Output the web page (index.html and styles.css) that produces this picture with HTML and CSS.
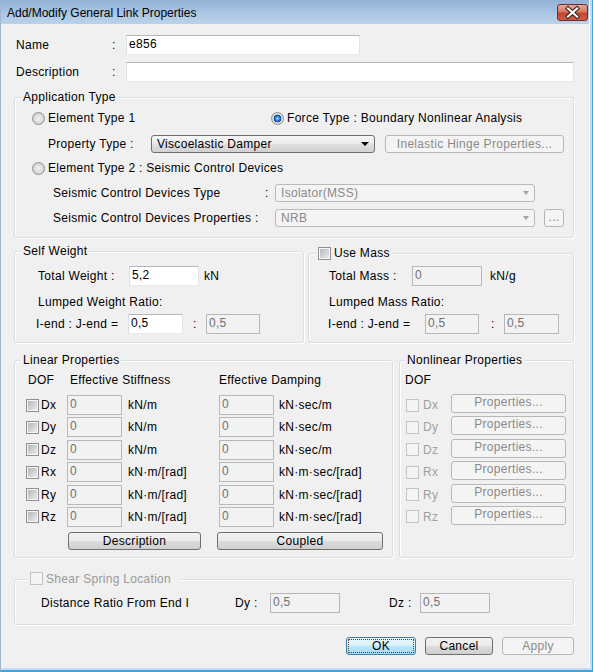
FILE: index.html
```html
<!DOCTYPE html>
<html>
  <head>
    <title>Add/Modify General Link Properties</title>
    <meta charset="UTF-8" />
    <link rel="stylesheet" href="styles.css">
  </head>
  <body>
    <div class="window">
      <div class="frame">

        <!-- caption bar -->
        <div class="titlebar">
          <span class="caption">Add/Modify General Link Properties</span>
          <span class="close-btn">
            <svg width="29" height="15" viewBox="0 0 29 15">
              <path d="M10 3.5 L19 11.5 M19 3.5 L10 11.5" stroke="#3d1f1c" stroke-width="4.2" stroke-linecap="square" fill="none"/>
              <path d="M10 3.5 L19 11.5 M19 3.5 L10 11.5" stroke="#ffffff" stroke-width="2.2" stroke-linecap="square" fill="none"/>
            </svg>
          </span>
        </div>

        <div class="client">
          <div class="row r-name">
            <span class="top-lbl">Name</span><span class="top-colon">:</span>
            <div class="edit name-edit">e856</div>
          </div>
          <div class="row r-desc">
            <span class="top-lbl">Description</span><span class="top-colon">:</span>
            <div class="edit desc-edit"></div>
          </div>

          <!-- Application Type -->
          <div class="group app-group">
            <div class="group-title">Application Type</div>
            <div class="row app-r1">
              <span class="opt opt-type1"><span class="radio"></span>Element Type 1</span>
              <span class="opt"><span class="radio on"></span>Force Type : Boundary Nonlinear Analysis</span>
            </div>
            <div class="row app-r2">
              <span class="prop-lbl">Property Type :</span>
              <div class="combo prop-combo"><span class="combo-text">Viscoelastic Damper</span><span class="arrow"></span></div>
              <div class="btn dis hinge-btn">Inelastic Hinge Properties...</div>
            </div>
            <div class="row app-r3">
              <span class="opt"><span class="radio"></span>Element Type 2 : Seismic Control Devices</span>
            </div>
            <div class="row app-r4">
              <span class="scd-lbl">Seismic Control Devices Type</span><span class="scd-colon">:</span>
              <div class="combo dis scd-combo"><span class="combo-text">Isolator(MSS)</span><span class="arrow"></span></div>
            </div>
            <div class="row app-r5">
              <span class="scd-lbl wide">Seismic Control Devices Properties :</span>
              <div class="combo dis scd-combo"><span class="combo-text">NRB</span><span class="arrow"></span></div>
              <div class="btn dis dots-btn">...</div>
            </div>
          </div>

          <!-- Self Weight / Use Mass -->
          <div class="pair">
            <div class="group weight-group">
              <div class="group-title">Self Weight</div>
              <div class="row w-total">
                <span class="w-lbl">Total Weight :</span>
                <div class="edit w70">5,2</div>
                <span class="unit-kn">kN</span>
              </div>
              <div class="row w-ratio">Lumped Weight Ratio:</div>
              <div class="row w-ends">
                <span class="w-end-lbl">I-end : J-end =</span>
                <div class="edit w55">0,5</div>
                <span class="w-colon">:</span>
                <div class="edit dis w54">0,5</div>
              </div>
            </div>

            <div class="group mass-group">
              <div class="group-title title-check"><span class="check"></span>Use Mass</div>
              <div class="row m-total">
                <span class="m-lbl">Total Mass :</span>
                <div class="edit dis w70">0</div>
                <span class="unit-kng">kN/g</span>
              </div>
              <div class="row m-ratio">Lumped Mass Ratio:</div>
              <div class="row m-ends">
                <span class="m-end-lbl">I-end : J-end =</span>
                <div class="edit dis w54">0,5</div>
                <span class="m-colon">:</span>
                <div class="edit dis w55">0,5</div>
              </div>
            </div>
          </div>

          <!-- Linear / Nonlinear -->
          <div class="pair pair-props">
            <div class="group lin-group">
              <div class="group-title">Linear Properties</div>
              <div class="row lin-head">
                <span class="h-dof">DOF</span>
                <span class="h-stiff">Effective Stiffness</span>
                <span>Effective Damping</span>
              </div>
              <div class="row lin-row first">
                <span class="check"></span><span class="dof">Dx</span>
                <div class="edit dis w55">0</div><span class="unit-k">kN/m</span>
                <div class="edit dis w55">0</div><span class="unit-c">kN·sec/m</span>
              </div>
              <div class="row lin-row">
                <span class="check"></span><span class="dof">Dy</span>
                <div class="edit dis w55">0</div><span class="unit-k">kN/m</span>
                <div class="edit dis w55">0</div><span class="unit-c">kN·sec/m</span>
              </div>
              <div class="row lin-row">
                <span class="check"></span><span class="dof">Dz</span>
                <div class="edit dis w55">0</div><span class="unit-k">kN/m</span>
                <div class="edit dis w55">0</div><span class="unit-c">kN·sec/m</span>
              </div>
              <div class="row lin-row">
                <span class="check"></span><span class="dof">Rx</span>
                <div class="edit dis w55">0</div><span class="unit-k">kN·m/[rad]</span>
                <div class="edit dis w55">0</div><span class="unit-c">kN·m·sec/[rad]</span>
              </div>
              <div class="row lin-row">
                <span class="check"></span><span class="dof">Ry</span>
                <div class="edit dis w55">0</div><span class="unit-k">kN·m/[rad]</span>
                <div class="edit dis w55">0</div><span class="unit-c">kN·m·sec/[rad]</span>
              </div>
              <div class="row lin-row">
                <span class="check"></span><span class="dof">Rz</span>
                <div class="edit dis w55">0</div><span class="unit-k">kN·m/[rad]</span>
                <div class="edit dis w55">0</div><span class="unit-c">kN·m·sec/[rad]</span>
              </div>
              <div class="row lin-btns">
                <div class="btn desc-btn">Description</div>
                <div class="btn coupled-btn">Coupled</div>
              </div>
            </div>

            <div class="group nl-group">
              <div class="group-title">Nonlinear Properties</div>
              <div class="row nl-head">DOF</div>
              <div class="row lin-row first nl-row"><span class="check dis"></span><span class="nl-dof">Dx</span><div class="btn dis nl-btn">Properties...</div></div>
              <div class="row lin-row nl-row"><span class="check dis"></span><span class="nl-dof">Dy</span><div class="btn dis nl-btn">Properties...</div></div>
              <div class="row lin-row nl-row"><span class="check dis"></span><span class="nl-dof">Dz</span><div class="btn dis nl-btn">Properties...</div></div>
              <div class="row lin-row nl-row"><span class="check dis"></span><span class="nl-dof">Rx</span><div class="btn dis nl-btn">Properties...</div></div>
              <div class="row lin-row nl-row"><span class="check dis"></span><span class="nl-dof">Ry</span><div class="btn dis nl-btn">Properties...</div></div>
              <div class="row lin-row nl-row"><span class="check dis"></span><span class="nl-dof">Rz</span><div class="btn dis nl-btn">Properties...</div></div>
            </div>
          </div>

          <!-- Shear Spring Location -->
          <div class="group shear-group">
            <div class="group-title title-check shear-title"><span class="check dis"></span>Shear Spring Location</div>
            <div class="row shear-row">
              <span class="dist-lbl">Distance Ratio From End I</span>
              <span class="dy-lbl">Dy :</span>
              <div class="edit dis w70">0,5</div>
              <span class="dz-lbl">Dz :</span>
              <div class="edit dis w70">0,5</div>
            </div>
          </div>

          <div class="row dlg-buttons">
            <div class="btn default ok-btn">OK</div>
            <div class="btn cancel-btn">Cancel</div>
            <div class="btn dis apply-btn">Apply</div>
          </div>
        </div>
      </div>
    </div>
  </body>
</html>
```

FILE: styles.css
```css
* {
  box-sizing: border-box;
}

body {
  margin: 0;
  font-family: "Liberation Sans", Arial, sans-serif;
  font-size: 12px;
  color: #000;
  background: #fff;
}

/* window chrome */
.window {
  width: 593px;
  height: 672px;
  display: flex;
  flex-direction: column;
  border-left: 1px solid #9fb7d0;
  border-right: 1px solid #3aa8dc;
  border-bottom: 2px solid #3aa8dc;
  background: #c4dbf1;
}
.frame {
  flex: 1;
  margin-right: 2px;
  margin-bottom: 2px;
  display: flex;
  flex-direction: column;
  background: #f0f0f0;
  border-right: 1px solid #fff;
}
.titlebar {
  height: 24px;
  display: flex;
  align-items: flex-start;
  background: linear-gradient(#93b2d7, #adc7e4 60%, #bad2ea);
}
.caption {
  margin: 6px 0 0 6px;
  line-height: 14px;
}
.close-btn {
  margin: 4px 1px 0 auto;
  width: 31px;
  height: 17px;
  display: flex;
  border: 1px solid #6b2e29;
  border-radius: 3px;
  background: linear-gradient(#e7a898, #d47963 45%, #c2452f 55%, #cf5d44);
}

.client {
  flex: 1;
  padding-top: 11px;
  letter-spacing: 0.3px;
}

.row {
  display: flex;
  align-items: center;
  height: 20px;
  white-space: nowrap;
}

/* controls */
.edit {
  height: 20px;
  padding: 1px 2px;
  line-height: 14px;
  background: #fff;
  border: 1px solid;
  border-color: #b4b6bb #e1e5ea #e6e9ee #dcdfe4;
  flex: none;
}
.edit.dis {
  background: #f2f2f2;
  border-color: #b8b8b8;
  color: #707070;
}
.w70 { width: 70px; }
.w55 { width: 55px; }
.w54 { width: 54px; }

.combo {
  height: 18px;
  display: flex;
  align-items: center;
  border: 1px solid #707070;
  border-radius: 3px;
  background: linear-gradient(#f6f6f6, #ececec 45%, #dedede 55%, #d2d2d2);
  padding-left: 5px;
  flex: none;
}
.combo .arrow {
  margin: 0 5px 0 auto;
  border-left: 4px solid transparent;
  border-right: 4px solid transparent;
  border-top: 4px solid #000;
}
.combo.dis {
  background: #f4f4f4;
  border-color: #b9b9b9;
  color: #8a8a8a;
}
.combo.dis .arrow {
  border-left-width: 3.5px;
  border-right-width: 3.5px;
  border-top-color: #a4a4a4;
}

.btn {
  height: 18px;
  line-height: 16px;
  text-align: center;
  border: 1px solid #707070;
  border-radius: 3px;
  background: linear-gradient(#f2f2f2, #ebebeb 50%, #dddddd 51%, #cfcfcf);
  flex: none;
}
.btn.dis {
  background: #f4f4f4;
  border-color: #b7b7b7;
  color: #8a8a8a;
}
.btn.default {
  border-color: #3c7fb1;
  background: linear-gradient(#eaf6fd, #d9f0fc 50%, #bee6fd 51%, #a7d9f5);
  outline: 1px dotted #5a3a2a;
  outline-offset: -3px;
}

.radio {
  width: 13px;
  height: 13px;
  margin-right: 3px;
  border-radius: 50%;
  border: 1px solid #8e8f8f;
  background: radial-gradient(circle, #f2f2f2 0, #e2e2e2 3px, #cfcfcf 6px);
  flex: none;
}
.radio.on {
  background: radial-gradient(circle, #bfe8ff 0, #4a9be0 1.5px, #1561b3 3px, #0d4a92 3.6px, #e6e6e6 4.2px, #cdcdcd 6px);
}
.opt {
  display: flex;
  align-items: center;
}

.check {
  width: 13px;
  height: 13px;
  padding: 1px;
  border: 1px solid #8e8f8f;
  background: linear-gradient(135deg, #b3b7bc, #ebebeb) content-box, #f6f6f6;
  flex: none;
}
.check.dis {
  border-color: #c4c4c4;
  background: #f4f4f4;
}

/* group boxes */
.group {
  border: 1px solid #d5dfe5;
  border-radius: 3px;
  box-shadow: 1px 1px 0 #fff, inset 1px 1px 0 #fff;
}
.group-title {
  width: max-content;
  height: 14px;
  line-height: 14px;
  margin: -8px 0 0 6px;
  padding: 0 2px;
  background: #f0f0f0;
  display: flex;
  align-items: center;
}
.title-check .check {
  margin-right: 3px;
}

/* top rows */
.r-name .top-lbl,
.r-desc .top-lbl {
  margin-left: 15px;
  width: 96px;
}
.top-colon {
  width: 14px;
}
.r-desc {
  margin-top: 7px;
}
.name-edit { width: 234px; }
.desc-edit { width: 448px; }

/* Application Type */
.app-group {
  margin: 15px 0 0 13px;
  width: 560px;
  padding-bottom: 9px;
}
.app-r1 { margin-top: 4px; padding-left: 17px; }
.opt-type1 { width: 239px; }
.app-r2 { margin-top: 6px; padding-left: 33px; }
.prop-lbl { width: 103px; }
.prop-combo { width: 224px; }
.hinge-btn { width: 179px; margin-left: 10px; }
.app-r3 { margin-top: 4px; padding-left: 17px; }
.app-r4 { margin-top: 5px; padding-left: 38px; }
.app-r5 { margin-top: 5px; padding-left: 38px; }
.scd-lbl { width: 212px; }
.scd-lbl.wide { width: 222px; }
.scd-colon { width: 10px; }
.scd-combo { width: 260px; }
.dots-btn { width: 20px; margin-left: 9px; line-height: 14px; }

/* Self Weight / Use Mass */
.pair {
  display: flex;
  align-items: flex-start;
  gap: 4px;
  margin: 13px 0 0 13px;
}
.weight-group {
  width: 290px;
  padding-bottom: 8px;
}
.mass-group {
  width: 266px;
  margin-top: 2px;
  padding-bottom: 8px;
}
.mass-group .group-title {
  margin-left: 7px;
}
.w-total { margin-top: 8px; padding-left: 23px; }
.w-lbl { width: 91px; }
.unit-kn { margin-left: 5px; }
.w-ratio { margin-top: 6px; padding-left: 23px; }
.w-ends { margin-top: 2px; padding-left: 21px; }
.w-end-lbl { width: 92px; }
.w-colon { width: 23px; padding-left: 10px; }

.m-total { margin-top: 6px; padding-left: 20px; }
.m-lbl { width: 83px; }
.unit-kng { margin-left: 8px; }
.m-ratio { margin-top: 6px; padding-left: 20px; }
.m-ends { margin-top: 2px; padding-left: 19px; }
.m-end-lbl { width: 97px; }
.m-colon { width: 25px; padding-left: 12px; }

/* Linear / Nonlinear */
.pair-props {
  align-items: stretch;
  gap: 6px;
  margin-top: 17px;
}
.lin-group {
  width: 379px;
  padding-bottom: 7px;
}
.nl-group {
  width: 175px;
}
.nl-group .group-title {
  margin-left: 5px;
}
.lin-head { margin-top: 3px; padding-left: 13px; }
.h-dof { width: 42px; }
.h-stiff { width: 149px; }
.lin-row { margin-top: 2.4px; padding-left: 11px; }
.lin-row.first { margin-top: 5px; }
.dof { margin-left: 2px; width: 26px; }
.unit-k { margin-left: 6px; width: 91px; }
.unit-c { margin-left: 5px; }
.lin-btns { height: 18px; margin-top: 5px; padding-left: 53px; }
.desc-btn { width: 133px; }
.coupled-btn { width: 166px; margin-left: 16px; }

.nl-head { margin-top: 3px; padding-left: 5px; }
.nl-row { padding-left: 6px; }
.nl-dof { margin-left: 4px; width: 28px; color: #a0a0a0; }
.nl-btn { width: 115px; height: 19px; line-height: 15px; margin-top: -3px; }

/* Shear Spring Location */
.shear-group {
  margin: 21px 0 0 13px;
  width: 560px;
  padding-bottom: 11px;
}
.shear-title {
  margin-left: 13px;
  padding-right: 8px;
  color: #9a9a9a;
}
.shear-row { margin-top: 7px; padding-left: 26px; }
.dist-lbl { width: 194px; }
.dy-lbl { width: 35px; }
.dz-lbl { width: 31px; margin-left: 49px; }

/* dialog buttons */
.dlg-buttons {
  height: 18px;
  margin: 12px 0 0 345px;
}
.ok-btn { width: 70px; }
.cancel-btn { width: 68px; margin-left: 9px; }
.apply-btn { width: 72px; margin-left: 9px; }
```
